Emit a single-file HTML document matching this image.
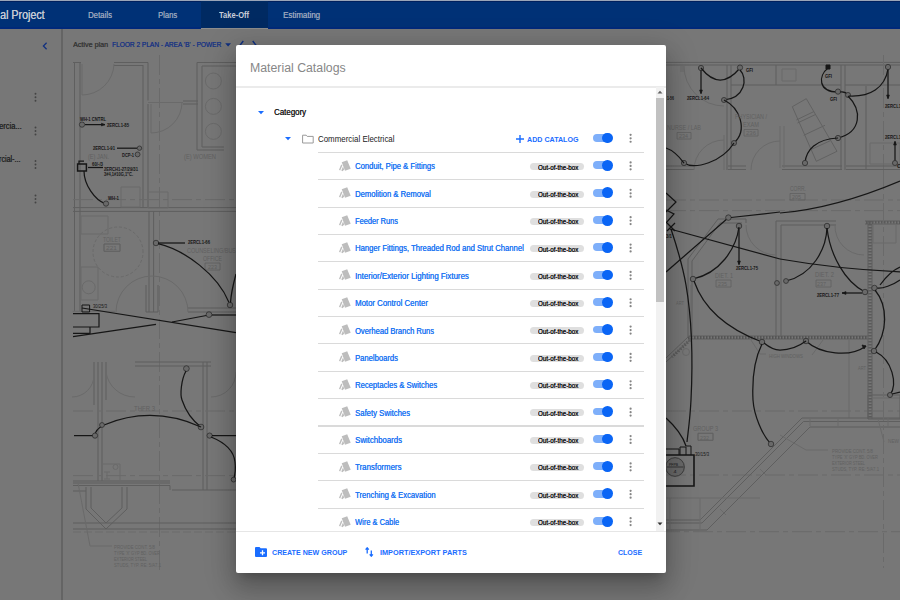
<!DOCTYPE html><html><head><meta charset="utf-8"><style>
*{box-sizing:border-box;margin:0;padding:0}
html,body{width:900px;height:600px;overflow:hidden;background:#777;font-family:"Liberation Sans",sans-serif}
.a{position:absolute}
.t{position:absolute;white-space:nowrap;line-height:1;transform-origin:0 0}
#topbar{left:0;top:0;width:900px;height:29px;background:#003176;border-top:1px solid #9aa5b8}
#sidebar{left:0;top:29px;width:62px;height:571px;background:#777}
#vline{left:61px;top:29px;width:1.5px;height:571px;background:#646464}
#modal{left:236px;top:45px;width:430px;height:528px;background:#fff;border-radius:2px;box-shadow:0 7px 10px -5px rgba(0,0,0,.22),0 16px 25px 2px rgba(0,0,0,.16),0 6px 31px 5px rgba(0,0,0,.14)}
.dv{position:absolute;height:1.2px;background:#e0e0e0}
.pill{position:absolute;width:53.5px;height:7px;border-radius:3.5px;background:#dfdfdf}
.tr{position:absolute;width:19px;height:7.8px;border-radius:3.9px;background:#7eaffa}
.kn{position:absolute;width:10.8px;height:10.8px;border-radius:50%;background:#0a65f5}
</style></head><body>
<div id="topbar" class="a">
<div class="a" style="left:0;top:26px;width:900px;height:2px;background:#00297a"></div><div class="a" style="left:0;top:0;width:900px;height:1px;background:#00205e"></div>
<div class="a" style="left:200.5px;top:0;width:67.5px;height:28px;background:#002a62;border-bottom:1.6px solid #8c8c8c"></div>
</div>
<div class="t" style="left:-0.3px;top:9.40px;font-size:12px;color:#c2c8d4;transform:scaleX(0.8914);text-shadow:0.2px 0 0 #c2c8d4;">al Project</div>
<div class="t" style="left:88.2px;top:11.20px;font-size:8.4px;color:#95a2bb;transform:scaleX(0.9293);text-shadow:0.25px 0 0 #95a2bb;">Details</div>
<div class="t" style="left:157.8px;top:11.20px;font-size:8.4px;color:#95a2bb;transform:scaleX(0.9068);text-shadow:0.25px 0 0 #95a2bb;">Plans</div>
<div class="t" style="left:219.3px;top:11.20px;font-size:8.4px;color:#c8cdd8;font-weight:700;transform:scaleX(0.9023);">Take-Off</div>
<div class="t" style="left:282.8px;top:11.20px;font-size:8.4px;color:#95a2bb;transform:scaleX(0.9461);text-shadow:0.25px 0 0 #95a2bb;">Estimating</div>
<div id="sidebar" class="a"></div><div id="vline" class="a"></div>
<svg class="a" style="left:0;top:0" width="900" height="600" viewBox="0 0 900 600" fill="none">
<path d="M74.5 62.5V311" stroke="#5f5f5f" stroke-width="1"/>
<path d="M80 62.5V311" stroke="#5f5f5f" stroke-width="1"/>
<path d="M72.7 311.3H115" stroke="#6a6a6a" stroke-width="1"/>
<path d="M81 267H98V300H81Z" stroke="#6a6a6a" stroke-width="1"/>
<path d="M95.2 287.3A6.5 6.5 0 1 0 82.2 287.3A6.5 6.5 0 1 0 95.2 287.3" stroke="#6a6a6a" stroke-width="1"/>
<path d="M73 62.5H81M114 62.5H148" stroke="#5f5f5f" stroke-width="1"/>
<path d="M114 65.5H143" stroke="#5f5f5f" stroke-width="1"/>
<path d="M143 65V208M148 62.5V100.5" stroke="#5f5f5f" stroke-width="1"/>
<path d="M82 64V95" stroke="#6a6a6a" stroke-width="1"/>
<path d="M82 95A32 32 0 0 0 114 64" stroke="#6a6a6a" stroke-width="1"/>
<path d="M159.5 55V570" stroke="#6a6a6a" stroke-width="1" stroke-dasharray="20 4 5 4"/>
<path d="M148 102.5H183" stroke="#6a6a6a" stroke-width="1"/>
<path d="M183 101H198M183 104H198" stroke="#5f5f5f" stroke-width="1"/>
<path d="M151 104V133" stroke="#6a6a6a" stroke-width="1"/>
<path d="M151 133A31 31 0 0 0 182 102" stroke="#6a6a6a" stroke-width="1"/>
<path d="M197 62.5H236M197 62.5V150M197 150H224M202 66H236M202 66V147M202 147H224" stroke="#5f5f5f" stroke-width="1"/>
<path d="M221.4 81A8 8 0 1 0 205.4 81A8 8 0 1 0 221.4 81" stroke="#6a6a6a" stroke-width="1"/>
<path d="M221.4 106.4A8 8 0 1 0 205.4 106.4A8 8 0 1 0 221.4 106.4" stroke="#6a6a6a" stroke-width="1"/>
<path d="M221.4 131.4A8 8 0 1 0 205.4 131.4A8 8 0 1 0 221.4 131.4" stroke="#6a6a6a" stroke-width="1"/>
<path d="M148 104V208" stroke="#5f5f5f" stroke-width="1"/>
<path d="M73 207.6H236M73 211.4H236" stroke="#5f5f5f" stroke-width="1"/>
<path d="M73 199.6H236" stroke="#6a6a6a" stroke-width="1" stroke-dasharray="20 4 5 4"/>
<path d="M121 187H140V207H121Z" stroke="#6a6a6a" stroke-width="1"/>
<path d="M148 192H168V208H148Z" stroke="#6a6a6a" stroke-width="1"/>
<path d="M81 216H108V234H81Z" stroke="#6a6a6a" stroke-width="1"/>
<path d="M143 252A25 25 0 1 0 93 252A25 25 0 1 0 143 252" stroke="#6a6a6a" stroke-width="1" stroke-dasharray="3 2"/>
<path d="M104 244H120V251H104Z" stroke="#6a6a6a" stroke-width="1"/>
<path d="M149 211V312M153.6 211V312" stroke="#5f5f5f" stroke-width="1"/>
<path d="M146 285V312M158 285V312M146 312H158M188 308H236M188 312H236" stroke="#5f5f5f" stroke-width="1"/>
<path d="M116 312A36 36 0 0 1 188 312" stroke="#6a6a6a" stroke-width="1"/>
<path d="M135 362H211M135 366H211M94 362V405M106 362V400M98 362V481M102 362V481" stroke="#5f5f5f" stroke-width="1"/>
<path d="M203 362V490M207 362V490" stroke="#5f5f5f" stroke-width="1"/>
<path d="M72 397A22 22 0 0 0 94 375" stroke="#6a6a6a" stroke-width="1"/>
<path d="M106 372A29 29 0 0 0 135 397" stroke="#6a6a6a" stroke-width="1"/>
<path d="M211 397A25 25 0 0 0 236 372" stroke="#6a6a6a" stroke-width="1"/>
<path d="M73 411H236" stroke="#6a6a6a" stroke-width="1" stroke-dasharray="20 4 5 4"/>
<path d="M73 475.6H236" stroke="#6a6a6a" stroke-width="1" stroke-dasharray="20 4 5 4"/>
<path d="M73 481H170M73 483H170M73 485.5H170V490M172 490H236M73 491H86" stroke="#5f5f5f" stroke-width="1"/>
<path d="M101 464H120V481" stroke="#6a6a6a" stroke-width="1"/>
<path d="M104 472H110M107 472V479M104 479H110" stroke="#6a6a6a" stroke-width="1"/>
<path d="M118 467A2.5 2.5 0 1 0 113 467A2.5 2.5 0 1 0 118 467" stroke="#6a6a6a" stroke-width="1"/>
<path d="M86 487V509L106 529L127 509V487M91 487V508L106 523L122 508V487" stroke="#5f5f5f" stroke-width="1"/>
<path d="M73 523H236" stroke="#5f5f5f" stroke-width="1"/>
<path d="M73 529H236" stroke="#5f5f5f" stroke-width="1"/>
<path d="M73 532H236" stroke="#6c6c6c" stroke-width="1.2" stroke-dasharray="8 3"/>
<path d="M78 483L90 546H112" stroke="#6a6a6a" stroke-width="1"/>
<path d="M666 62.4H900M666 65H900" stroke="#5f5f5f" stroke-width="1"/>
<path d="M727 65V170M731 65V170M731 85H780M776 65V85" stroke="#5f5f5f" stroke-width="1"/>
<path d="M841 65V170M845 65V170M780 85H841M845 85H900M866 86V170" stroke="#5f5f5f" stroke-width="1"/>
<path d="M883.5 55V170" stroke="#6a6a6a" stroke-width="1" stroke-dasharray="20 4 5 4"/>
<path d="M666 166H694M728 166H746M782 166H842M846 166H900M666 169.5H694M728 169.5H746M782 169.5H842M846 169.5H900" stroke="#5f5f5f" stroke-width="1"/>
<path d="M780 126V168M784 126V168" stroke="#6a6a6a" stroke-width="1"/>
<path d="M694 170A30 30 0 0 1 724 140M724 135V170" stroke="#6a6a6a" stroke-width="1"/>
<path d="M751 170A29 29 0 0 1 780 141" stroke="#6a6a6a" stroke-width="1"/>
<path d="M684 66A40 40 0 0 0 724 106" stroke="#6a6a6a" stroke-width="1"/>
<path d="M680 67H684M680 69H684M680 71H684" stroke="#6a6a6a" stroke-width="1"/>
<path d="M792.3 106.7L806.3 98.7L837 151.3L816.3 161.3Z" stroke="#626262" stroke-width="1"/>
<path d="M796.3 120L814 111.5M797.5 123L815.5 114.5M803.7 135.3L825 125.3M810 150L830.3 140.7" stroke="#626262" stroke-width="1"/>
<path d="M782 69H796V81H782Z" stroke="#6a6a6a" stroke-width="1"/>
<path d="M870 143H900V164H870Z" stroke="#6a6a6a" stroke-width="1"/>
<path d="M666 200H900" stroke="#6a6a6a" stroke-width="1" stroke-dasharray="20 4 5 4"/>
<path d="M666 210.6H900" stroke="#6a6a6a" stroke-width="1" stroke-dasharray="20 4 5 4"/>
<path d="M688 337V259L718 219H746V223M692 337V261L720 223H742" stroke="#5f5f5f" stroke-width="1"/>
<path d="M776 221V337M781 225V337M776 221H836M781 225H836" stroke="#5f5f5f" stroke-width="1"/>
<path d="M690 340L672 357" stroke="#5a5a5a" stroke-width="3" stroke-dasharray="1.5 1.5"/>
<path d="M746 225A30 30 0 0 0 776 255M776 223V255" stroke="#6a6a6a" stroke-width="1"/>
<path d="M835 225A29 29 0 0 0 864 255" stroke="#6a6a6a" stroke-width="1"/>
<path d="M868 221V419M872 224V419M865 221H900M865 224H900" stroke="#5f5f5f" stroke-width="1"/>
<path d="M870 221V419" stroke="#5a5a5a" stroke-width="3.5" stroke-dasharray="1.5 1.5"/>
<path d="M866 222.5H900" stroke="#5a5a5a" stroke-width="3" stroke-dasharray="1.5 1.5"/>
<path d="M873 224H896V243H873Z" stroke="#6a6a6a" stroke-width="1"/>
<path d="M688 336H868M688 339H868" stroke="#5f5f5f" stroke-width="1"/>
<path d="M688 337.5H868" stroke="#555" stroke-width="3" stroke-dasharray="1.5 1.5"/>
<path d="M688 337L666 358M690 340L666 362" stroke="#5f5f5f" stroke-width="1"/>
<path d="M688 285V337M691 285V337" stroke="#6a6a6a" stroke-width="1"/>
<path d="M689.5 352A3.5 3.5 0 1 0 682.5 352A3.5 3.5 0 1 0 689.5 352" stroke="#6a6a6a" stroke-width="1"/>
<path d="M849 340V418" stroke="#6a6a6a" stroke-width="1"/>
<path d="M751 340L760 354H766" stroke="#6a6a6a" stroke-width="1"/>
<path d="M823 340L812 355" stroke="#6a6a6a" stroke-width="1"/>
<path d="M872 398H900" stroke="#6a6a6a" stroke-width="1"/>
<path d="M666 411H900" stroke="#6a6a6a" stroke-width="1" stroke-dasharray="20 4 5 4"/>
<path d="M666 475H900" stroke="#6a6a6a" stroke-width="1" stroke-dasharray="20 4 5 4"/>
<path d="M698 433H713V440H698Z" stroke="#6a6a6a" stroke-width="1"/>
<path d="M665 520H700L802 418H900M665 523H702L803.5 421.5H900M665 530H707L810 427H900" stroke="#5f5f5f" stroke-width="1"/>
<path d="M720 509L726 515M760 469L766 475" stroke="#6a6a6a" stroke-width="1"/>
<path d="M868 395H900V419H868Z" stroke="#5f5f5f" stroke-width="1"/>
<path d="M810 418V426M838 418V426M888 418V426" stroke="#6a6a6a" stroke-width="1"/>
<path d="M780 435L806 450H828" stroke="#6a6a6a" stroke-width="1"/>
<path d="M878 419L884 442" stroke="#6a6a6a" stroke-width="1"/>
<path d="M666 498H760" stroke="#6a6a6a" stroke-width="1"/>
<path d="M670 498V530M700 498V530" stroke="#6a6a6a" stroke-width="1"/>
<path d="M660 531.7H900" stroke="#6a6a6a" stroke-width="1" stroke-dasharray="20 4 5 4"/>
<path d="M883.5 170V568" stroke="#6a6a6a" stroke-width="1" stroke-dasharray="20 4 5 4"/>
<path d="M104 244h16v7.5h-16Z" stroke="#616161" stroke-width="0.8"/>
<path d="M205 263h15v7h-15Z" stroke="#616161" stroke-width="0.8"/>
<path d="M677 132.5h14v6.5h-14Z" stroke="#616161" stroke-width="0.8"/>
<path d="M744 129.5h14v6.5h-14Z" stroke="#616161" stroke-width="0.8"/>
<path d="M716 280h15v7h-15Z" stroke="#616161" stroke-width="0.8"/>
<path d="M790 193.5h15v6.5h-15Z" stroke="#616161" stroke-width="0.8"/>
<path d="M816 280h15v7h-15Z" stroke="#616161" stroke-width="0.8"/>
<path d="M698 433.5h15v7h-15Z" stroke="#616161" stroke-width="0.8"/>
<path d="M84.64 124.6A2.64 2.64 0 1 0 79.36 124.6A2.64 2.64 0 1 0 84.64 124.6" fill="#696969" stroke="#2e2e2e" stroke-width="0.8"/>
<path d="M85 124.6H105" stroke="#161616" stroke-width="1.25"/>
<path d="M105 124.6L101.5 123.2V126Z" fill="#161616" stroke="#161616" stroke-width="0.6"/>
<path d="M117 148.2H137" stroke="#161616" stroke-width="1.25"/>
<path d="M141.7 148.2A2.2 2.2 0 1 0 137.3 148.2A2.2 2.2 0 1 0 141.7 148.2" fill="#696969" stroke="#2e2e2e" stroke-width="0.8"/>
<path d="M140.01999999999998 154.4A2.4200000000000004 2.4200000000000004 0 1 0 135.18 154.4A2.4200000000000004 2.4200000000000004 0 1 0 140.01999999999998 154.4" fill="#696969" stroke="#2e2e2e" stroke-width="0.8"/>
<path d="M77.6 164H86.4V171H77.6Z" stroke="#161616" stroke-width="1.5"/>
<path d="M79 164V161H84" stroke="#161616" stroke-width="1.25"/>
<path d="M88 167.5H103" stroke="#161616" stroke-width="1.25"/>
<path d="M84 171C84 185 95 200 105 203.6" stroke="#161616" stroke-width="1.25"/>
<path d="M108.64 203.6A2.64 2.64 0 1 0 103.36 203.6A2.64 2.64 0 1 0 108.64 203.6" fill="#696969" stroke="#2e2e2e" stroke-width="0.8"/>
<path d="M158.75 243A2.75 2.75 0 1 0 153.25 243A2.75 2.75 0 1 0 158.75 243" fill="#696969" stroke="#2e2e2e" stroke-width="0.8"/>
<path d="M158 243H185" stroke="#161616" stroke-width="1.25"/>
<path d="M158 243.6C185 250 218 275 229 302.5" stroke="#161616" stroke-width="1.25"/>
<path d="M73 313.6H99V327H73M73 333.4H90V327" stroke="#161616" stroke-width="1.2"/>
<path d="M82 305H89.6V312H82Z" stroke="#161616" stroke-width="1"/>
<path d="M82 308L236 332.6" stroke="#161616" stroke-width="1.25"/>
<path d="M73 336.6L156 324.4" stroke="#161616" stroke-width="1.25"/>
<path d="M172 322L209 315" stroke="#161616" stroke-width="1.25"/>
<path d="M211.86 314.6A2.8600000000000003 2.8600000000000003 0 1 0 206.14 314.6A2.8600000000000003 2.8600000000000003 0 1 0 211.86 314.6" fill="#696969" stroke="#2e2e2e" stroke-width="0.8"/>
<path d="M212 315H236" stroke="#161616" stroke-width="1.25"/>
<path d="M232.75 305A2.75 2.75 0 1 0 227.25 305A2.75 2.75 0 1 0 232.75 305" fill="#696969" stroke="#2e2e2e" stroke-width="0.8"/>
<path d="M236 274C233 285 231 295 230.5 302.5" stroke="#161616" stroke-width="1.25"/>
<path d="M189.26000000000002 368.6A2.8600000000000003 2.8600000000000003 0 1 0 183.54 368.6A2.8600000000000003 2.8600000000000003 0 1 0 189.26000000000002 368.6" fill="#696969" stroke="#2e2e2e" stroke-width="0.8"/>
<path d="M186 371C181 380 180 395 182 400C186 412 193 421 201 427" stroke="#161616" stroke-width="1.25"/>
<path d="M203.86 427A2.8600000000000003 2.8600000000000003 0 1 0 198.14 427A2.8600000000000003 2.8600000000000003 0 1 0 203.86 427" fill="#696969" stroke="#2e2e2e" stroke-width="0.8"/>
<path d="M104 425Q152 405 201 427" stroke="#161616" stroke-width="1.25"/>
<path d="M104 425C98 428 95 431 95 435.6" stroke="#161616" stroke-width="1.25"/>
<path d="M97.64 435.6A2.64 2.64 0 1 0 92.36 435.6A2.64 2.64 0 1 0 97.64 435.6" fill="#696969" stroke="#2e2e2e" stroke-width="0.8"/>
<path d="M74 435.6H92.5" stroke="#161616" stroke-width="1.25"/>
<path d="M104.42 425A2.4200000000000004 2.4200000000000004 0 1 0 99.58 425A2.4200000000000004 2.4200000000000004 0 1 0 104.42 425" fill="#696969" stroke="#2e2e2e" stroke-width="0.8"/>
<path d="M212.23999999999998 435.6A2.64 2.64 0 1 0 206.96 435.6A2.64 2.64 0 1 0 212.23999999999998 435.6" fill="#696969" stroke="#2e2e2e" stroke-width="0.8"/>
<path d="M212 435.6H236" stroke="#161616" stroke-width="1.25"/>
<path d="M211 437C226 443 234 452 235 462C236 470 235 475 233.6 479.6" stroke="#161616" stroke-width="1.25"/>
<path d="M236.01999999999998 479.6A2.4200000000000004 2.4200000000000004 0 1 0 231.18 479.6A2.4200000000000004 2.4200000000000004 0 1 0 236.01999999999998 479.6" fill="#696969" stroke="#2e2e2e" stroke-width="0.8"/>
<path d="M703.64 68A2.64 2.64 0 1 0 698.36 68A2.64 2.64 0 1 0 703.64 68" fill="#696969" stroke="#2e2e2e" stroke-width="0.8"/>
<path d="M701 70.5V93" stroke="#161616" stroke-width="1.25"/>
<path d="M701 94L699.6 90H702.4Z" fill="#161616" stroke="#161616" stroke-width="0.6"/>
<path d="M701 68Q720 92 740 68" stroke="#161616" stroke-width="1.25"/>
<path d="M742.64 67.6A2.64 2.64 0 1 0 737.36 67.6A2.64 2.64 0 1 0 742.64 67.6" fill="#696969" stroke="#2e2e2e" stroke-width="0.8"/>
<path d="M740 70C748 78 745 98 724 100" stroke="#161616" stroke-width="1.25"/>
<path d="M726.53 100A2.53 2.53 0 1 0 721.47 100A2.53 2.53 0 1 0 726.53 100" fill="#696969" stroke="#2e2e2e" stroke-width="0.8"/>
<path d="M724 100C740 108 748 130 734 143" stroke="#161616" stroke-width="1.25"/>
<path d="M736.53 143A2.53 2.53 0 1 0 731.47 143A2.53 2.53 0 1 0 736.53 143" fill="#696969" stroke="#2e2e2e" stroke-width="0.8"/>
<path d="M734 143C722 162 695 170 684 163" stroke="#161616" stroke-width="1.25"/>
<path d="M686.64 163A2.64 2.64 0 1 0 681.36 163A2.64 2.64 0 1 0 686.64 163" fill="#696969" stroke="#2e2e2e" stroke-width="0.8"/>
<path d="M684 163C678 155 672 150 666 148" stroke="#161616" stroke-width="1.25"/>
<path d="M828 68C818 76 818 92 838 92" stroke="#161616" stroke-width="1.25"/>
<path d="M826 65H830V69H826Z" fill="#161616" stroke="#161616" stroke-width="1"/>
<path d="M840.64 91.6A2.64 2.64 0 1 0 835.36 91.6A2.64 2.64 0 1 0 840.64 91.6" fill="#696969" stroke="#2e2e2e" stroke-width="0.8"/>
<path d="M840 92Q845 91 848 95" stroke="#161616" stroke-width="1.25"/>
<path d="M850.53 95A2.53 2.53 0 1 0 845.47 95A2.53 2.53 0 1 0 850.53 95" fill="#696969" stroke="#2e2e2e" stroke-width="0.8"/>
<path d="M848 96C862 110 862 132 838 138" stroke="#161616" stroke-width="1.25"/>
<path d="M840.64 138A2.64 2.64 0 1 0 835.36 138A2.64 2.64 0 1 0 840.64 138" fill="#696969" stroke="#2e2e2e" stroke-width="0.8"/>
<path d="M838 138C816 139 806 150 805 163" stroke="#161616" stroke-width="1.25"/>
<path d="M807.64 163A2.64 2.64 0 1 0 802.36 163A2.64 2.64 0 1 0 807.64 163" fill="#696969" stroke="#2e2e2e" stroke-width="0.8"/>
<path d="M849 96C870 97 885 88 888 69" stroke="#161616" stroke-width="1.25"/>
<path d="M890.64 67A2.64 2.64 0 1 0 885.36 67A2.64 2.64 0 1 0 890.64 67" fill="#696969" stroke="#2e2e2e" stroke-width="0.8"/>
<path d="M888 69.5V98" stroke="#161616" stroke-width="1.25"/>
<path d="M888 99L886.6 95H889.4Z" fill="#161616" stroke="#161616" stroke-width="0.6"/>
<path d="M895 142V162" stroke="#161616" stroke-width="1.25"/>
<path d="M895 141L893.6 145H896.4Z" fill="#161616" stroke="#161616" stroke-width="0.6"/>
<path d="M897.53 163A2.53 2.53 0 1 0 892.47 163A2.53 2.53 0 1 0 897.53 163" fill="#696969" stroke="#2e2e2e" stroke-width="0.8"/>
<path d="M666 193L676 202L666 212M666 210L674 214L666 223" stroke="#161616" stroke-width="1.2"/>
<path d="M667 223L675 231M675 223L667 231" stroke="#161616" stroke-width="1.2"/>
<path d="M670 229L780 259" stroke="#161616" stroke-width="1.25"/>
<path d="M671 229C678 250 683 268 686 285" stroke="#161616" stroke-width="1.25"/>
<path d="M666 272L728 218" stroke="#161616" stroke-width="1.25"/>
<path d="M731.15 217.6A2.75 2.75 0 1 0 725.65 217.6A2.75 2.75 0 1 0 731.15 217.6" fill="#696969" stroke="#2e2e2e" stroke-width="0.8"/>
<path d="M731 217.5L780 212" stroke="#161616" stroke-width="1.25"/>
<path d="M741.75 226A2.75 2.75 0 1 0 736.25 226A2.75 2.75 0 1 0 741.75 226" fill="#696969" stroke="#2e2e2e" stroke-width="0.8"/>
<path d="M739 228.5V264" stroke="#161616" stroke-width="1.25"/>
<path d="M739 265L737.6 261H740.4Z" fill="#161616" stroke="#161616" stroke-width="0.6"/>
<path d="M739 227C736 249 720 273 693 279" stroke="#161616" stroke-width="1.25"/>
<path d="M695.75 279A2.75 2.75 0 1 0 690.25 279A2.75 2.75 0 1 0 695.75 279" fill="#696969" stroke="#2e2e2e" stroke-width="0.8"/>
<path d="M780 213C815 210 855 200 900 181" stroke="#161616" stroke-width="1.25"/>
<path d="M780 259C820 266 860 270 900 272" stroke="#161616" stroke-width="1.25"/>
<path d="M829.75 226A2.75 2.75 0 1 0 824.25 226A2.75 2.75 0 1 0 829.75 226" fill="#696969" stroke="#2e2e2e" stroke-width="0.8"/>
<path d="M827 228C826 250 812 275 786 281" stroke="#161616" stroke-width="1.25"/>
<path d="M827 228C830 255 845 282 865 292" stroke="#161616" stroke-width="1.25"/>
<path d="M788.42 281A2.4200000000000004 2.4200000000000004 0 1 0 783.58 281A2.4200000000000004 2.4200000000000004 0 1 0 788.42 281" fill="#696969" stroke="#2e2e2e" stroke-width="0.8"/>
<path d="M880 285C885 278 893 270 900 267" stroke="#161616" stroke-width="1.25"/>
<path d="M686 285C692 320 693 360 691 400C690 420 688 432 687 442" stroke="#161616" stroke-width="1.25"/>
<path d="M694 281C704 310 730 330 762 342" stroke="#161616" stroke-width="1.25"/>
<path d="M764.75 342A2.75 2.75 0 1 0 759.25 342A2.75 2.75 0 1 0 764.75 342" fill="#696969" stroke="#2e2e2e" stroke-width="0.8"/>
<path d="M762 344C754 360 752 380 753 400C754 415 762 435 771 444" stroke="#161616" stroke-width="1.25"/>
<path d="M773.75 444A2.75 2.75 0 1 0 768.25 444A2.75 2.75 0 1 0 773.75 444" fill="#696969" stroke="#2e2e2e" stroke-width="0.8"/>
<path d="M764 343C770 348 776 350 780 350" stroke="#161616" stroke-width="1.25"/>
<path d="M779.42 283A2.4200000000000004 2.4200000000000004 0 1 0 774.58 283A2.4200000000000004 2.4200000000000004 0 1 0 779.42 283" fill="#696969" stroke="#2e2e2e" stroke-width="0.8"/>
<path d="M867.75 292A2.75 2.75 0 1 0 862.25 292A2.75 2.75 0 1 0 867.75 292" fill="#696969" stroke="#2e2e2e" stroke-width="0.8"/>
<path d="M842 293H862" stroke="#161616" stroke-width="1.25"/>
<path d="M842 293L846 291.6V294.4Z" fill="#161616" stroke="#161616" stroke-width="0.6"/>
<path d="M900 280C893 285 882 289 877 288" stroke="#161616" stroke-width="1.25"/>
<path d="M877.15 288A2.75 2.75 0 1 0 871.65 288A2.75 2.75 0 1 0 877.15 288" fill="#696969" stroke="#2e2e2e" stroke-width="0.8"/>
<path d="M875 290C888 306 888 332 874 351" stroke="#161616" stroke-width="1.25"/>
<path d="M876.75 351A2.75 2.75 0 1 0 871.25 351A2.75 2.75 0 1 0 876.75 351" fill="#696969" stroke="#2e2e2e" stroke-width="0.8"/>
<path d="M806 341C820 354 850 358 866 346" stroke="#161616" stroke-width="1.25"/>
<path d="M808.75 341A2.75 2.75 0 1 0 803.25 341A2.75 2.75 0 1 0 808.75 341" fill="#696969" stroke="#2e2e2e" stroke-width="0.8"/>
<path d="M866 346L862 345L864 349Z" fill="#161616" stroke="#161616" stroke-width="0.8"/>
<path d="M806 341C798 347 790 350 780 350" stroke="#161616" stroke-width="1.25"/>
<path d="M876 352C892 360 898 384 890 395" stroke="#161616" stroke-width="1.25"/>
<path d="M892.53 395A2.53 2.53 0 1 0 887.47 395A2.53 2.53 0 1 0 892.53 395" fill="#696969" stroke="#2e2e2e" stroke-width="0.8"/>
<path d="M892 394L900 392" stroke="#161616" stroke-width="1.25"/>
<path d="M666 418C676 427 683 437 686 446" stroke="#161616" stroke-width="1.25"/>
<path d="M666 455H694V486H666" stroke="#161616" stroke-width="1.6"/>
<path d="M680 455V447H686V455M686 446H691V455" stroke="#161616" stroke-width="1"/>
<path d="M666 449H679V455" stroke="#161616" stroke-width="1"/>
<path d="M684.35 467A9.350000000000001 9.350000000000001 0 1 0 665.65 467A9.350000000000001 9.350000000000001 0 1 0 684.35 467" fill="#696969" stroke="#2e2e2e" stroke-width="0.8"/>
<path d="M666.5 467H683.5" stroke="#161616" stroke-width="0.6"/>
<g font-family="Liberation Sans" >
<text x="80" y="120.6" font-size="5.8" fill="#161616" font-weight="bold" textLength="26" lengthAdjust="spacingAndGlyphs">WH-1 CNTRL</text>
<text x="107" y="126.6" font-size="5.8" fill="#161616" font-weight="bold" textLength="22" lengthAdjust="spacingAndGlyphs">2ERCL1-85</text>
<text x="93" y="150.4" font-size="5.8" fill="#161616" font-weight="bold" textLength="22" lengthAdjust="spacingAndGlyphs">2ERCL1-91</text>
<text x="122" y="157" font-size="5.8" fill="#161616" font-weight="bold" textLength="12" lengthAdjust="spacingAndGlyphs">DCP-1</text>
<text x="92" y="166" font-size="5.8" fill="#161616" font-weight="bold" textLength="11" lengthAdjust="spacingAndGlyphs">60/-/3</text>
<text x="104" y="170.8" font-size="5.8" fill="#161616" font-weight="bold" textLength="34" lengthAdjust="spacingAndGlyphs">2ERCH1-27/29/31</text>
<text x="104" y="176.4" font-size="5.8" fill="#161616" font-weight="bold" textLength="29" lengthAdjust="spacingAndGlyphs">3#4,1#10G,1&quot;C.</text>
<text x="108" y="200.4" font-size="5.2" fill="#161616" font-weight="bold" textLength="11" lengthAdjust="spacingAndGlyphs">WH-1</text>
<text x="188" y="243.6" font-size="5.8" fill="#161616" font-weight="bold" textLength="22" lengthAdjust="spacingAndGlyphs">2ERCL1-66</text>
<text x="93" y="308.4" font-size="5.4" fill="#161616" font-weight="normal" textLength="14" lengthAdjust="spacingAndGlyphs">30/25/3</text>
<text x="88" y="158.6" font-size="6.3" fill="#616161" font-weight="normal" textLength="21" lengthAdjust="spacingAndGlyphs">(E) JAN.</text>
<text x="184" y="158.6" font-size="6.3" fill="#616161" font-weight="normal" textLength="32" lengthAdjust="spacingAndGlyphs">(E) WOMEN</text>
<text x="103" y="242" font-size="6.3" fill="#616161" font-weight="normal" textLength="18" lengthAdjust="spacingAndGlyphs">TOILET</text>
<text x="106" y="250.2" font-size="5.6" fill="#616161" font-weight="normal" textLength="11" lengthAdjust="spacingAndGlyphs">221</text>
<text x="187" y="252.6" font-size="6.3" fill="#616161" font-weight="normal" textLength="49" lengthAdjust="spacingAndGlyphs">COUNSELING/BUS</text>
<text x="203" y="261" font-size="6.3" fill="#616161" font-weight="normal" textLength="19" lengthAdjust="spacingAndGlyphs">OFFICE</text>
<text x="208" y="268.6" font-size="5.6" fill="#616161" font-weight="normal" textLength="9" lengthAdjust="spacingAndGlyphs">223</text>
<text x="134" y="410.6" font-size="6.3" fill="#616161" font-weight="normal" textLength="21" lengthAdjust="spacingAndGlyphs">THFR 3</text>
<text x="114" y="549" font-size="5.6" fill="#616161" font-weight="normal" textLength="41" lengthAdjust="spacingAndGlyphs">PROVIDE CONT. 5/8</text>
<text x="832" y="453" font-size="5.6" fill="#616161" font-weight="normal" textLength="41" lengthAdjust="spacingAndGlyphs">PROVIDE CONT. 5/8</text>
<text x="114" y="555" font-size="5.6" fill="#616161" font-weight="normal" textLength="46" lengthAdjust="spacingAndGlyphs">TYPE 'X' GYP BD. OVER</text>
<text x="832" y="459" font-size="5.6" fill="#616161" font-weight="normal" textLength="46" lengthAdjust="spacingAndGlyphs">TYPE 'X' GYP BD. OVER</text>
<text x="114" y="561" font-size="5.6" fill="#616161" font-weight="normal" textLength="33" lengthAdjust="spacingAndGlyphs">EXTERIOR STEEL</text>
<text x="832" y="465" font-size="5.6" fill="#616161" font-weight="normal" textLength="33" lengthAdjust="spacingAndGlyphs">EXTERIOR STEEL</text>
<text x="114" y="567" font-size="5.6" fill="#616161" font-weight="normal" textLength="47" lengthAdjust="spacingAndGlyphs">STUDS, TYP. RE: 5/A7.1</text>
<text x="832" y="471" font-size="5.6" fill="#616161" font-weight="normal" textLength="47" lengthAdjust="spacingAndGlyphs">STUDS, TYP. RE: 5/A7.1</text>
<text x="687" y="100.4" font-size="5.8" fill="#161616" font-weight="bold" textLength="22" lengthAdjust="spacingAndGlyphs">2ERCL1-64</text>
<text x="746" y="71.6" font-size="5.4" fill="#161616" font-weight="bold" textLength="7" lengthAdjust="spacingAndGlyphs">GFI</text>
<text x="667" y="100.4" font-size="5.8" fill="#161616" font-weight="bold" textLength="7" lengthAdjust="spacingAndGlyphs">1-56</text>
<text x="825" y="78" font-size="5.4" fill="#161616" font-weight="bold" textLength="7" lengthAdjust="spacingAndGlyphs">GFI</text>
<text x="830" y="101" font-size="5.4" fill="#161616" font-weight="bold" textLength="7" lengthAdjust="spacingAndGlyphs">GFI</text>
<text x="885" y="108" font-size="5.8" fill="#161616" font-weight="bold" textLength="16" lengthAdjust="spacingAndGlyphs">2ERCL1</text>
<text x="885" y="138.6" font-size="5.8" fill="#161616" font-weight="bold" textLength="16" lengthAdjust="spacingAndGlyphs">2ERCL1</text>
<text x="897" y="168" font-size="5.8" fill="#161616" font-weight="bold" textLength="4" lengthAdjust="spacingAndGlyphs">C</text>
<text x="667" y="129.6" font-size="6.3" fill="#616161" font-weight="normal" textLength="34" lengthAdjust="spacingAndGlyphs">NURSE / LAB</text>
<text x="679" y="137.8" font-size="5.6" fill="#616161" font-weight="normal" textLength="9" lengthAdjust="spacingAndGlyphs">234</text>
<text x="735" y="118.6" font-size="6.3" fill="#616161" font-weight="normal" textLength="32" lengthAdjust="spacingAndGlyphs">PHYSICIAN /</text>
<text x="743" y="127" font-size="6.3" fill="#616161" font-weight="normal" textLength="16" lengthAdjust="spacingAndGlyphs">EXAM</text>
<text x="746" y="134.8" font-size="5.6" fill="#616161" font-weight="normal" textLength="10" lengthAdjust="spacingAndGlyphs">236</text>
<text x="666" y="238" font-size="5" fill="#161616" font-weight="bold" textLength="6" lengthAdjust="spacingAndGlyphs">3/1</text>
<text x="736" y="270.4" font-size="5.8" fill="#161616" font-weight="bold" textLength="22" lengthAdjust="spacingAndGlyphs">2ERCL1-75</text>
<text x="715" y="277.6" font-size="6.3" fill="#616161" font-weight="normal" textLength="18" lengthAdjust="spacingAndGlyphs">DIET. 1</text>
<text x="718" y="285.6" font-size="5.6" fill="#616161" font-weight="normal" textLength="9" lengthAdjust="spacingAndGlyphs">235</text>
<text x="790" y="191" font-size="6.3" fill="#616161" font-weight="normal" textLength="16" lengthAdjust="spacingAndGlyphs">CORR.</text>
<text x="792" y="198.8" font-size="5.6" fill="#616161" font-weight="normal" textLength="9" lengthAdjust="spacingAndGlyphs">205</text>
<text x="815" y="277" font-size="6.3" fill="#616161" font-weight="normal" textLength="19" lengthAdjust="spacingAndGlyphs">DIET. 2</text>
<text x="817" y="285.6" font-size="5.6" fill="#616161" font-weight="normal" textLength="9" lengthAdjust="spacingAndGlyphs">237</text>
<text x="817" y="296.6" font-size="5.8" fill="#161616" font-weight="bold" textLength="22" lengthAdjust="spacingAndGlyphs">2ERCL1-77</text>
<text x="676" y="305" font-size="5.6" fill="#616161" font-weight="normal" textLength="8" lengthAdjust="spacingAndGlyphs">ART</text>
<text x="769" y="357.8" font-size="5.6" fill="#616161" font-weight="normal" textLength="11" lengthAdjust="spacingAndGlyphs">HIGH</text>
<text x="781" y="357.8" font-size="5.6" fill="#616161" font-weight="normal" textLength="22" lengthAdjust="spacingAndGlyphs">WINDOWS</text>
<text x="858" y="370" font-size="5.6" fill="#616161" font-weight="normal" textLength="8" lengthAdjust="spacingAndGlyphs">ART</text>
<text x="693" y="431" font-size="6.3" fill="#616161" font-weight="normal" textLength="25" lengthAdjust="spacingAndGlyphs">GROUP 3</text>
<text x="700" y="439.6" font-size="5.6" fill="#616161" font-weight="normal" textLength="9" lengthAdjust="spacingAndGlyphs">232</text>
<text x="695" y="456.4" font-size="5.4" fill="#161616" font-weight="normal" textLength="14" lengthAdjust="spacingAndGlyphs">30/15/3</text>
<text x="888" y="443" font-size="5.6" fill="#616161" font-weight="normal" textLength="11" lengthAdjust="spacingAndGlyphs">NEW</text>
<text x="669" y="465.5" font-size="4.4" fill="#161616" font-weight="normal" textLength="9" lengthAdjust="spacingAndGlyphs">PFPB</text>
<text x="673.5" y="472.5" font-size="4.4" fill="#161616" font-weight="normal" textLength="3" lengthAdjust="spacingAndGlyphs">4</text>
</g></svg>
<svg class="a" style="left:42px;top:42px" width="6" height="8"><path d="M4.6 0.8L1.4 4L4.6 7.2" stroke="#13317f" stroke-width="1.3" fill="none"/></svg>
<svg class="a" style="left:0;top:0" width="60" height="220"><circle cx="35.5" cy="93.8" r="0.95" fill="#444"/><circle cx="35.5" cy="97.3" r="0.95" fill="#444"/><circle cx="35.5" cy="100.8" r="0.95" fill="#444"/><circle cx="35.5" cy="127.5" r="0.95" fill="#444"/><circle cx="35.5" cy="131" r="0.95" fill="#444"/><circle cx="35.5" cy="134.5" r="0.95" fill="#444"/><circle cx="35.5" cy="161.0" r="0.95" fill="#444"/><circle cx="35.5" cy="164.5" r="0.95" fill="#444"/><circle cx="35.5" cy="168.0" r="0.95" fill="#444"/><circle cx="35.5" cy="195.5" r="0.95" fill="#444"/><circle cx="35.5" cy="199" r="0.95" fill="#444"/><circle cx="35.5" cy="202.5" r="0.95" fill="#444"/></svg>
<svg class="a" style="left:225px;top:42.5px" width="7" height="4"><path d="M0.2 0.2H6L3.1 3.5Z" fill="#10307f"/></svg>
<svg class="a" style="left:238px;top:40px" width="22" height="12"><path d="M5.3 1L1.8 5.5L5.3 10M14.7 1L18.2 5.5L14.7 10" stroke="#10307f" stroke-width="1.4" fill="none"/></svg>
<div class="t" style="left:-1.2px;top:121.80px;font-size:8.6px;color:#262626;transform:scaleX(0.8800);text-shadow:0.15px 0 0 #262626;">ercia...</div>
<div class="t" style="left:-0.8px;top:155.00px;font-size:8.6px;color:#262626;transform:scaleX(0.8301);text-shadow:0.15px 0 0 #262626;">rcial-...</div>
<div class="t" style="left:72.8px;top:40.60px;font-size:7.8px;color:#363636;transform:scaleX(0.9177);text-shadow:0.2px 0 0 #363636;">Active plan</div>
<div class="t" style="left:111.8px;top:40.60px;font-size:7.8px;color:#1a3583;transform:scaleX(0.8404);text-shadow:0.25px 0 0 #1a3583;">FLOOR 2 PLAN - AREA &#39;B&#39; - POWER</div>
<div id="modal" class="a"></div>
<div class="dv" style="left:236px;top:86px;width:430px;height:1.5px;background:#ebebeb"></div>
<svg class="a" style="left:258px;top:110.5px" width="6" height="4"><path d="M0 0H6L3 3.2Z" fill="#1a6dff"/></svg>
<svg class="a" style="left:285px;top:137px" width="6" height="4"><path d="M0 0H6L3 3.2Z" fill="#1a6dff"/></svg>
<svg class="a" style="left:302px;top:133.5px" width="12" height="10"><path d="M0.6 1.2H4.2L5.2 2.4H11.2V9H0.6Z" fill="none" stroke="#9a9a9a" stroke-width="1"/></svg>
<svg class="a" style="left:516px;top:135px" width="9" height="9"><path d="M4 0V8M0 4H8" stroke="#1a6dff" stroke-width="1.4"/></svg>
<div class="dv" style="left:318px;top:151.85px;width:326px;height:1.1px;background:#dadada"></div>
<svg class="a" style="left:338px;top:159.90px" width="14" height="12"><g fill="#bdbdbd"><path d="M3.7 2.3L9.2 0.3L12.7 8.7L7 10.8Z"/><path d="M1 9.7L3.2 4.6L4.4 5.2L2.2 10.6Z"/><path d="M3.3 10.5L5 6.4L6.2 9.6L4.6 11.2Z"/></g></svg>
<div class="pill" style="left:530.4px;top:163.20px"></div>
<div class="dv" style="left:318px;top:179.21px;width:326px;height:1.1px;background:#dadada"></div>
<svg class="a" style="left:338px;top:187.26px" width="14" height="12"><g fill="#bdbdbd"><path d="M3.7 2.3L9.2 0.3L12.7 8.7L7 10.8Z"/><path d="M1 9.7L3.2 4.6L4.4 5.2L2.2 10.6Z"/><path d="M3.3 10.5L5 6.4L6.2 9.6L4.6 11.2Z"/></g></svg>
<div class="pill" style="left:530.4px;top:190.56px"></div>
<div class="dv" style="left:318px;top:206.57px;width:326px;height:1.1px;background:#dadada"></div>
<svg class="a" style="left:338px;top:214.62px" width="14" height="12"><g fill="#bdbdbd"><path d="M3.7 2.3L9.2 0.3L12.7 8.7L7 10.8Z"/><path d="M1 9.7L3.2 4.6L4.4 5.2L2.2 10.6Z"/><path d="M3.3 10.5L5 6.4L6.2 9.6L4.6 11.2Z"/></g></svg>
<div class="pill" style="left:530.4px;top:217.92px"></div>
<div class="dv" style="left:318px;top:233.93px;width:326px;height:1.1px;background:#dadada"></div>
<svg class="a" style="left:338px;top:241.98px" width="14" height="12"><g fill="#bdbdbd"><path d="M3.7 2.3L9.2 0.3L12.7 8.7L7 10.8Z"/><path d="M1 9.7L3.2 4.6L4.4 5.2L2.2 10.6Z"/><path d="M3.3 10.5L5 6.4L6.2 9.6L4.6 11.2Z"/></g></svg>
<div class="pill" style="left:530.4px;top:245.28px"></div>
<div class="dv" style="left:318px;top:261.29px;width:326px;height:1.1px;background:#dadada"></div>
<svg class="a" style="left:338px;top:269.34px" width="14" height="12"><g fill="#bdbdbd"><path d="M3.7 2.3L9.2 0.3L12.7 8.7L7 10.8Z"/><path d="M1 9.7L3.2 4.6L4.4 5.2L2.2 10.6Z"/><path d="M3.3 10.5L5 6.4L6.2 9.6L4.6 11.2Z"/></g></svg>
<div class="pill" style="left:530.4px;top:272.64px"></div>
<div class="dv" style="left:318px;top:288.65px;width:326px;height:1.1px;background:#dadada"></div>
<svg class="a" style="left:338px;top:296.70px" width="14" height="12"><g fill="#bdbdbd"><path d="M3.7 2.3L9.2 0.3L12.7 8.7L7 10.8Z"/><path d="M1 9.7L3.2 4.6L4.4 5.2L2.2 10.6Z"/><path d="M3.3 10.5L5 6.4L6.2 9.6L4.6 11.2Z"/></g></svg>
<div class="pill" style="left:530.4px;top:300.00px"></div>
<div class="dv" style="left:318px;top:316.01px;width:326px;height:1.1px;background:#dadada"></div>
<svg class="a" style="left:338px;top:324.06px" width="14" height="12"><g fill="#bdbdbd"><path d="M3.7 2.3L9.2 0.3L12.7 8.7L7 10.8Z"/><path d="M1 9.7L3.2 4.6L4.4 5.2L2.2 10.6Z"/><path d="M3.3 10.5L5 6.4L6.2 9.6L4.6 11.2Z"/></g></svg>
<div class="pill" style="left:530.4px;top:327.36px"></div>
<div class="dv" style="left:318px;top:343.37px;width:326px;height:1.1px;background:#dadada"></div>
<svg class="a" style="left:338px;top:351.42px" width="14" height="12"><g fill="#bdbdbd"><path d="M3.7 2.3L9.2 0.3L12.7 8.7L7 10.8Z"/><path d="M1 9.7L3.2 4.6L4.4 5.2L2.2 10.6Z"/><path d="M3.3 10.5L5 6.4L6.2 9.6L4.6 11.2Z"/></g></svg>
<div class="pill" style="left:530.4px;top:354.72px"></div>
<div class="dv" style="left:318px;top:370.73px;width:326px;height:1.1px;background:#dadada"></div>
<svg class="a" style="left:338px;top:378.78px" width="14" height="12"><g fill="#bdbdbd"><path d="M3.7 2.3L9.2 0.3L12.7 8.7L7 10.8Z"/><path d="M1 9.7L3.2 4.6L4.4 5.2L2.2 10.6Z"/><path d="M3.3 10.5L5 6.4L6.2 9.6L4.6 11.2Z"/></g></svg>
<div class="pill" style="left:530.4px;top:382.08px"></div>
<div class="dv" style="left:318px;top:398.09px;width:326px;height:1.1px;background:#dadada"></div>
<svg class="a" style="left:338px;top:406.14px" width="14" height="12"><g fill="#bdbdbd"><path d="M3.7 2.3L9.2 0.3L12.7 8.7L7 10.8Z"/><path d="M1 9.7L3.2 4.6L4.4 5.2L2.2 10.6Z"/><path d="M3.3 10.5L5 6.4L6.2 9.6L4.6 11.2Z"/></g></svg>
<div class="pill" style="left:530.4px;top:409.44px"></div>
<div class="dv" style="left:318px;top:425.45px;width:326px;height:1.1px;background:#dadada"></div>
<svg class="a" style="left:338px;top:433.50px" width="14" height="12"><g fill="#bdbdbd"><path d="M3.7 2.3L9.2 0.3L12.7 8.7L7 10.8Z"/><path d="M1 9.7L3.2 4.6L4.4 5.2L2.2 10.6Z"/><path d="M3.3 10.5L5 6.4L6.2 9.6L4.6 11.2Z"/></g></svg>
<div class="pill" style="left:530.4px;top:436.80px"></div>
<div class="dv" style="left:318px;top:452.81px;width:326px;height:1.1px;background:#dadada"></div>
<svg class="a" style="left:338px;top:460.86px" width="14" height="12"><g fill="#bdbdbd"><path d="M3.7 2.3L9.2 0.3L12.7 8.7L7 10.8Z"/><path d="M1 9.7L3.2 4.6L4.4 5.2L2.2 10.6Z"/><path d="M3.3 10.5L5 6.4L6.2 9.6L4.6 11.2Z"/></g></svg>
<div class="pill" style="left:530.4px;top:464.16px"></div>
<div class="dv" style="left:318px;top:480.17px;width:326px;height:1.1px;background:#dadada"></div>
<svg class="a" style="left:338px;top:488.22px" width="14" height="12"><g fill="#bdbdbd"><path d="M3.7 2.3L9.2 0.3L12.7 8.7L7 10.8Z"/><path d="M1 9.7L3.2 4.6L4.4 5.2L2.2 10.6Z"/><path d="M3.3 10.5L5 6.4L6.2 9.6L4.6 11.2Z"/></g></svg>
<div class="pill" style="left:530.4px;top:491.52px"></div>
<div class="dv" style="left:318px;top:507.53px;width:326px;height:1.1px;background:#dadada"></div>
<svg class="a" style="left:338px;top:515.58px" width="14" height="12"><g fill="#bdbdbd"><path d="M3.7 2.3L9.2 0.3L12.7 8.7L7 10.8Z"/><path d="M1 9.7L3.2 4.6L4.4 5.2L2.2 10.6Z"/><path d="M3.3 10.5L5 6.4L6.2 9.6L4.6 11.2Z"/></g></svg>
<div class="pill" style="left:530.4px;top:518.88px"></div>
<div class="tr" style="left:593px;top:133.80px"></div><div class="kn" style="left:602.2px;top:132.50px"></div><div class="tr" style="left:593px;top:161.40px"></div><div class="kn" style="left:602.2px;top:160.10px"></div><div class="tr" style="left:593px;top:188.76px"></div><div class="kn" style="left:602.2px;top:187.46px"></div><div class="tr" style="left:593px;top:216.12px"></div><div class="kn" style="left:602.2px;top:214.82px"></div><div class="tr" style="left:593px;top:243.48px"></div><div class="kn" style="left:602.2px;top:242.18px"></div><div class="tr" style="left:593px;top:270.84px"></div><div class="kn" style="left:602.2px;top:269.54px"></div><div class="tr" style="left:593px;top:298.20px"></div><div class="kn" style="left:602.2px;top:296.90px"></div><div class="tr" style="left:593px;top:325.56px"></div><div class="kn" style="left:602.2px;top:324.26px"></div><div class="tr" style="left:593px;top:352.92px"></div><div class="kn" style="left:602.2px;top:351.62px"></div><div class="tr" style="left:593px;top:380.28px"></div><div class="kn" style="left:602.2px;top:378.98px"></div><div class="tr" style="left:593px;top:407.64px"></div><div class="kn" style="left:602.2px;top:406.34px"></div><div class="tr" style="left:593px;top:435.00px"></div><div class="kn" style="left:602.2px;top:433.70px"></div><div class="tr" style="left:593px;top:462.36px"></div><div class="kn" style="left:602.2px;top:461.06px"></div><div class="tr" style="left:593px;top:489.72px"></div><div class="kn" style="left:602.2px;top:488.42px"></div><div class="tr" style="left:593px;top:517.08px"></div><div class="kn" style="left:602.2px;top:515.78px"></div>
<svg class="a" style="left:620px;top:120px" width="20" height="420"><circle cx="10.6" cy="14.85" r="1.12" fill="#858585"/><circle cx="10.6" cy="18.30" r="1.12" fill="#858585"/><circle cx="10.6" cy="21.75" r="1.12" fill="#858585"/><circle cx="10.6" cy="42.45" r="1.12" fill="#858585"/><circle cx="10.6" cy="45.90" r="1.12" fill="#858585"/><circle cx="10.6" cy="49.35" r="1.12" fill="#858585"/><circle cx="10.6" cy="69.81" r="1.12" fill="#858585"/><circle cx="10.6" cy="73.26" r="1.12" fill="#858585"/><circle cx="10.6" cy="76.71" r="1.12" fill="#858585"/><circle cx="10.6" cy="97.17" r="1.12" fill="#858585"/><circle cx="10.6" cy="100.62" r="1.12" fill="#858585"/><circle cx="10.6" cy="104.07" r="1.12" fill="#858585"/><circle cx="10.6" cy="124.53" r="1.12" fill="#858585"/><circle cx="10.6" cy="127.98" r="1.12" fill="#858585"/><circle cx="10.6" cy="131.43" r="1.12" fill="#858585"/><circle cx="10.6" cy="151.89" r="1.12" fill="#858585"/><circle cx="10.6" cy="155.34" r="1.12" fill="#858585"/><circle cx="10.6" cy="158.79" r="1.12" fill="#858585"/><circle cx="10.6" cy="179.25" r="1.12" fill="#858585"/><circle cx="10.6" cy="182.70" r="1.12" fill="#858585"/><circle cx="10.6" cy="186.15" r="1.12" fill="#858585"/><circle cx="10.6" cy="206.61" r="1.12" fill="#858585"/><circle cx="10.6" cy="210.06" r="1.12" fill="#858585"/><circle cx="10.6" cy="213.51" r="1.12" fill="#858585"/><circle cx="10.6" cy="233.97" r="1.12" fill="#858585"/><circle cx="10.6" cy="237.42" r="1.12" fill="#858585"/><circle cx="10.6" cy="240.87" r="1.12" fill="#858585"/><circle cx="10.6" cy="261.33" r="1.12" fill="#858585"/><circle cx="10.6" cy="264.78" r="1.12" fill="#858585"/><circle cx="10.6" cy="268.23" r="1.12" fill="#858585"/><circle cx="10.6" cy="288.69" r="1.12" fill="#858585"/><circle cx="10.6" cy="292.14" r="1.12" fill="#858585"/><circle cx="10.6" cy="295.59" r="1.12" fill="#858585"/><circle cx="10.6" cy="316.05" r="1.12" fill="#858585"/><circle cx="10.6" cy="319.50" r="1.12" fill="#858585"/><circle cx="10.6" cy="322.95" r="1.12" fill="#858585"/><circle cx="10.6" cy="343.41" r="1.12" fill="#858585"/><circle cx="10.6" cy="346.86" r="1.12" fill="#858585"/><circle cx="10.6" cy="350.31" r="1.12" fill="#858585"/><circle cx="10.6" cy="370.77" r="1.12" fill="#858585"/><circle cx="10.6" cy="374.22" r="1.12" fill="#858585"/><circle cx="10.6" cy="377.67" r="1.12" fill="#858585"/><circle cx="10.6" cy="398.13" r="1.12" fill="#858585"/><circle cx="10.6" cy="401.58" r="1.12" fill="#858585"/><circle cx="10.6" cy="405.03" r="1.12" fill="#858585"/></svg>
<div class="a" style="left:656px;top:87px;width:8px;height:444px;background:#f1f1f1"></div>
<div class="a" style="left:656px;top:98px;width:8px;height:204px;background:#c1c1c1"></div>
<svg class="a" style="left:657px;top:90px" width="6" height="4"><path d="M0.5 3.5H5.5L3 0.8Z" fill="#606060"/></svg>
<svg class="a" style="left:657px;top:522px" width="6" height="4"><path d="M0.5 0.5H5.5L3 3.2Z" fill="#303030"/></svg>
<div class="dv" style="left:236px;top:530.5px;width:430px;height:1.3px;background:#e6e6e6"></div>
<svg class="a" style="left:255px;top:547px" width="12" height="10"><path d="M0 1A1 1 0 0 1 1 0H4.5L5.7 1.3H11A1 1 0 0 1 12 2.3V9A1 1 0 0 1 11 10H1A1 1 0 0 1 0 9Z" fill="#1a6dff"/><path d="M7.5 3.3V8.3M5 5.8H10" stroke="#fff" stroke-width="1.3"/></svg>
<svg class="a" style="left:365px;top:547px" width="9" height="10"><path d="M2.2 1V6.5M0.6 2.6L2.2 0.8L3.8 2.6M6.3 3.5V9M4.7 7.4L6.3 9.2L7.9 7.4" fill="none" stroke="#1a6dff" stroke-width="1.3"/></svg>
<div class="t" style="left:250px;top:61.80px;font-size:12.3px;color:#878787;">Material Catalogs</div>
<div class="t" style="left:274px;top:107.60px;font-size:8.8px;color:#222;transform:scaleX(0.8963);text-shadow:0.25px 0 0 #222;">Category</div>
<div class="t" style="left:318px;top:135.00px;font-size:8.6px;color:#222;transform:scaleX(0.9206);">Commercial Electrical</div>
<div class="t" style="left:527px;top:135.60px;font-size:8px;color:#1a6dff;font-weight:700;transform:scaleX(0.8891);">ADD CATALOG</div>
<div class="t" style="left:355px;top:162.40px;font-size:8.6px;color:#2176f3;transform:scaleX(0.89);text-shadow:0.2px 0 0 #2176f3;">Conduit, Pipe &amp; Fittings</div>
<div class="t" style="left:537.5px;top:164.50px;font-size:6.7px;color:#111;transform:scaleX(0.9345);text-shadow:0.1px 0 0 #111;">Out-of-the-box</div>
<div class="t" style="left:355px;top:189.76px;font-size:8.6px;color:#2176f3;transform:scaleX(0.89);text-shadow:0.2px 0 0 #2176f3;">Demolition &amp; Removal</div>
<div class="t" style="left:537.5px;top:191.86px;font-size:6.7px;color:#111;transform:scaleX(0.9345);text-shadow:0.1px 0 0 #111;">Out-of-the-box</div>
<div class="t" style="left:355px;top:217.12px;font-size:8.6px;color:#2176f3;transform:scaleX(0.8637);text-shadow:0.2px 0 0 #2176f3;">Feeder Runs</div>
<div class="t" style="left:537.5px;top:219.22px;font-size:6.7px;color:#111;transform:scaleX(0.9345);text-shadow:0.1px 0 0 #111;">Out-of-the-box</div>
<div class="t" style="left:355px;top:244.48px;font-size:8.6px;color:#2176f3;transform:scaleX(0.89);text-shadow:0.2px 0 0 #2176f3;">Hanger Fittings, Threaded Rod and Strut Channel</div>
<div class="t" style="left:537.5px;top:246.58px;font-size:6.7px;color:#111;transform:scaleX(0.9345);text-shadow:0.1px 0 0 #111;">Out-of-the-box</div>
<div class="t" style="left:355px;top:271.84px;font-size:8.6px;color:#2176f3;transform:scaleX(0.9165);text-shadow:0.2px 0 0 #2176f3;">Interior/Exterior Lighting Fixtures</div>
<div class="t" style="left:537.5px;top:273.94px;font-size:6.7px;color:#111;transform:scaleX(0.9345);text-shadow:0.1px 0 0 #111;">Out-of-the-box</div>
<div class="t" style="left:355px;top:299.20px;font-size:8.6px;color:#2176f3;transform:scaleX(0.9075);text-shadow:0.2px 0 0 #2176f3;">Motor Control Center</div>
<div class="t" style="left:537.5px;top:301.30px;font-size:6.7px;color:#111;transform:scaleX(0.9345);text-shadow:0.1px 0 0 #111;">Out-of-the-box</div>
<div class="t" style="left:355px;top:326.56px;font-size:8.6px;color:#2176f3;transform:scaleX(0.8788);text-shadow:0.2px 0 0 #2176f3;">Overhead Branch Runs</div>
<div class="t" style="left:537.5px;top:328.66px;font-size:6.7px;color:#111;transform:scaleX(0.9345);text-shadow:0.1px 0 0 #111;">Out-of-the-box</div>
<div class="t" style="left:355px;top:353.92px;font-size:8.6px;color:#2176f3;transform:scaleX(0.89);text-shadow:0.2px 0 0 #2176f3;">Panelboards</div>
<div class="t" style="left:537.5px;top:356.02px;font-size:6.7px;color:#111;transform:scaleX(0.9345);text-shadow:0.1px 0 0 #111;">Out-of-the-box</div>
<div class="t" style="left:355px;top:381.28px;font-size:8.6px;color:#2176f3;transform:scaleX(0.89);text-shadow:0.2px 0 0 #2176f3;">Receptacles &amp; Switches</div>
<div class="t" style="left:537.5px;top:383.38px;font-size:6.7px;color:#111;transform:scaleX(0.9345);text-shadow:0.1px 0 0 #111;">Out-of-the-box</div>
<div class="t" style="left:355px;top:408.64px;font-size:8.6px;color:#2176f3;transform:scaleX(0.9);text-shadow:0.2px 0 0 #2176f3;">Safety Switches</div>
<div class="t" style="left:537.5px;top:410.74px;font-size:6.7px;color:#111;transform:scaleX(0.9345);text-shadow:0.1px 0 0 #111;">Out-of-the-box</div>
<div class="t" style="left:355px;top:436.00px;font-size:8.6px;color:#2176f3;transform:scaleX(0.909);text-shadow:0.2px 0 0 #2176f3;">Switchboards</div>
<div class="t" style="left:537.5px;top:438.10px;font-size:6.7px;color:#111;transform:scaleX(0.9345);text-shadow:0.1px 0 0 #111;">Out-of-the-box</div>
<div class="t" style="left:355px;top:463.36px;font-size:8.6px;color:#2176f3;transform:scaleX(0.9136);text-shadow:0.2px 0 0 #2176f3;">Transformers</div>
<div class="t" style="left:537.5px;top:465.46px;font-size:6.7px;color:#111;transform:scaleX(0.9345);text-shadow:0.1px 0 0 #111;">Out-of-the-box</div>
<div class="t" style="left:355px;top:490.72px;font-size:8.6px;color:#2176f3;transform:scaleX(0.89);text-shadow:0.2px 0 0 #2176f3;">Trenching &amp; Excavation</div>
<div class="t" style="left:537.5px;top:492.82px;font-size:6.7px;color:#111;transform:scaleX(0.9345);text-shadow:0.1px 0 0 #111;">Out-of-the-box</div>
<div class="t" style="left:355px;top:518.08px;font-size:8.6px;color:#2176f3;transform:scaleX(0.87);text-shadow:0.2px 0 0 #2176f3;">Wire &amp; Cable</div>
<div class="t" style="left:537.5px;top:520.18px;font-size:6.7px;color:#111;transform:scaleX(0.9345);text-shadow:0.1px 0 0 #111;">Out-of-the-box</div>
<div class="t" style="left:272px;top:549.10px;font-size:8px;color:#1a6dff;font-weight:700;transform:scaleX(0.8885);">CREATE NEW GROUP</div>
<div class="t" style="left:380.3px;top:549.10px;font-size:8px;color:#1a6dff;font-weight:700;transform:scaleX(0.9140);">IMPORT/EXPORT PARTS</div>
<div class="t" style="left:618px;top:549.10px;font-size:8px;color:#1a6dff;font-weight:700;transform:scaleX(0.8780);">CLOSE</div>
</body></html>
